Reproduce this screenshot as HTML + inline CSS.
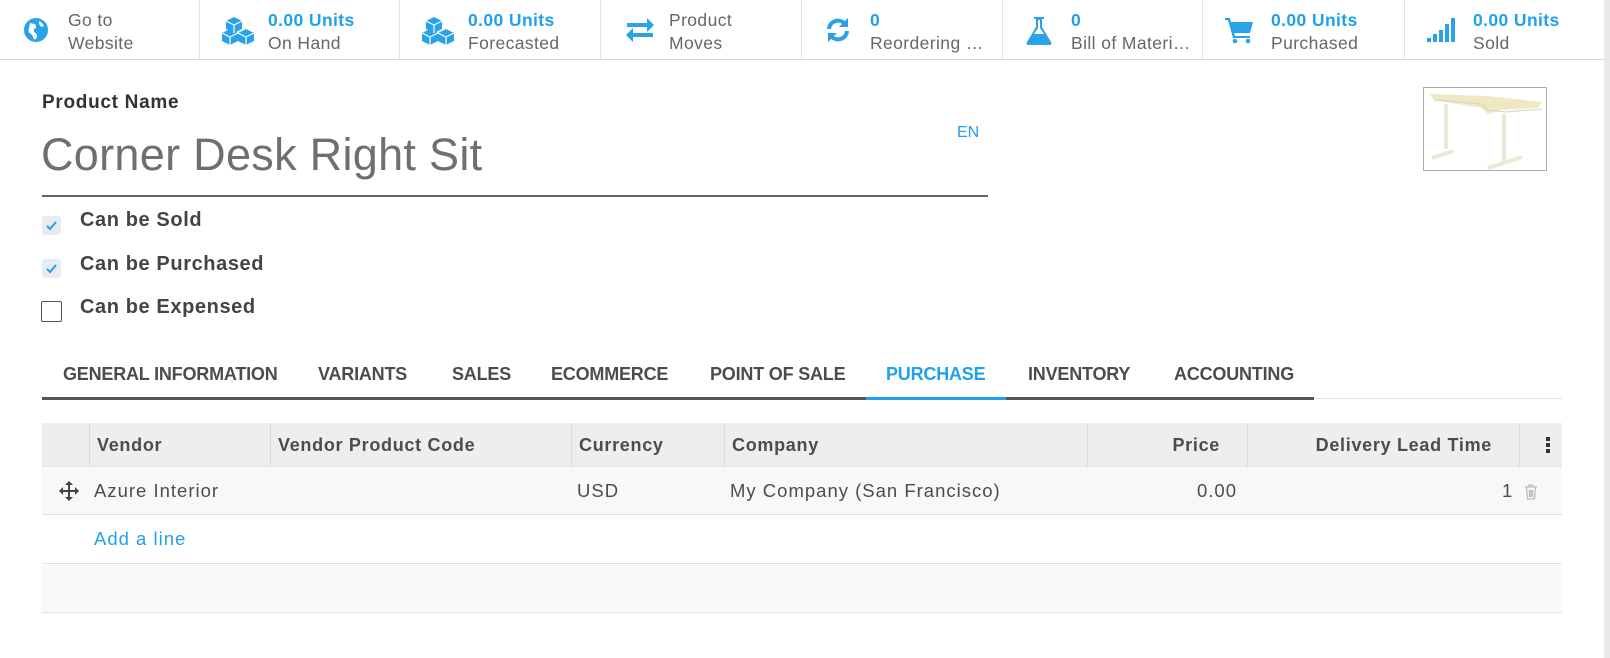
<!DOCTYPE html>
<html><head><meta charset="utf-8"><style>
*{box-sizing:border-box;margin:0;padding:0}
body{width:1610px;height:658px;background:#fff;font-family:"Liberation Sans",sans-serif;color:#4c4c4c;position:relative;overflow:hidden}
.a{position:absolute;white-space:nowrap}
.top{position:absolute;left:0;top:0;width:1605px;height:60px;border-bottom:1px solid #d8d8d8;background:#fff}
.btn{position:absolute;top:0;height:60px;border-right:1px solid #e2e2e2}
.btn svg{position:absolute;left:22px;top:16px}
.btn .t{position:absolute;left:68px;top:9px;font-size:17.5px;line-height:23px;color:#666;letter-spacing:0.4px}
.btn .b{color:#1fa1ec;font-weight:bold}
.sb{position:absolute;left:1604px;top:0;width:6px;height:658px;background:#e9e9e9}
.tab{position:absolute;top:364px;font-size:18px;font-weight:bold;color:#4c4c4c;letter-spacing:-0.2px}
.cb{position:absolute;left:42px;width:19px;height:19px;border-radius:3px;background:#e8ecf0}
.cb svg{position:absolute;left:4px;top:5px}
.lbl{position:absolute;left:80px;font-size:20px;font-weight:bold;color:#444;letter-spacing:0.6px;white-space:nowrap}
.row{position:absolute;left:42px;width:1520px}
.hd{position:absolute;top:0;height:44px;line-height:44px;font-weight:bold;font-size:18px;letter-spacing:0.7px;color:#4c4c4c;border-left:1px solid #dcdcdc;padding:0 7px;white-space:nowrap}
.hd.r{text-align:right;padding-right:27px}
.rt{font-size:18.5px;letter-spacing:1px}
</style></head><body>
<div class="top">
 <div class="btn" style="left:0;width:200px"><svg width="28" height="28" viewBox="0 0 28 28"><circle cx="14" cy="14" r="12" fill="#2aa2e8"/><path d="M8 7c3 1 5 0 6 3s-3 2-2 5 3 2 3 5-2 4-3 3-1-4-3-5-3-3-2-6z M17 5c2 1 4 3 5 5l-3 1-2-3z" fill="#fff"/></svg><div class="t">Go to<br>Website</div></div>
 <div class="btn" style="left:200px;width:200px"><svg width="38" height="30" viewBox="0 0 38 30"><g fill="#2aa2e8"><path d="M12 1l8 4v8l-8 4-8-4V5z"/><path d="M8 13l8 4v8l-8 4-8-4v-8z"/><path d="M24 13l8 4v8l-8 4-8-4v-8z"/></g><g stroke="#fff" stroke-width="1.2" fill="none"><path d="M4 5l8 4 8-4M12 9v8M0 17l8 4 8-4M8 21v8M16 17l8 4 8-4M24 21v8"/></g></svg><div class="t"><span class="b">0.00 Units</span><br>On Hand</div></div>
 <div class="btn" style="left:400px;width:201px"><svg width="38" height="30" viewBox="0 0 38 30"><g fill="#2aa2e8"><path d="M12 1l8 4v8l-8 4-8-4V5z"/><path d="M8 13l8 4v8l-8 4-8-4v-8z"/><path d="M24 13l8 4v8l-8 4-8-4v-8z"/></g><g stroke="#fff" stroke-width="1.2" fill="none"><path d="M4 5l8 4 8-4M12 9v8M0 17l8 4 8-4M8 21v8M16 17l8 4 8-4M24 21v8"/></g></svg><div class="t"><span class="b">0.00 Units</span><br>Forecasted</div></div>
 <div class="btn" style="left:601px;width:201px"><svg width="34" height="28" viewBox="0 0 34 28"><g fill="#2aa2e8"><path d="M4 7h20V2l7 7-7 7v-5H4z"/><path d="M30 17H10v-5l-7 7 7 7v-5h20z"/></g></svg><div class="t">Product<br>Moves</div></div>
 <div class="btn" style="left:802px;width:201px"><svg width="28" height="28" viewBox="0 0 28 28"><g fill="none" stroke="#2aa2e8" stroke-width="4"><path d="M5 13a9 9 0 0 1 16-5"/><path d="M23 15a9 9 0 0 1-16 5"/></g><path d="M24 2v9h-9z M4 26v-9h9z" fill="#2aa2e8"/></svg><div class="t"><span class="b">0</span><br>Reordering …</div></div>
 <div class="btn" style="left:1003px;width:200px"><svg width="28" height="30" viewBox="0 0 28 30"><path d="M9 1h10v2h-2v8l9 15c1 2 0 3-2 3H4c-2 0-3-1-2-3l9-15V3H9z" fill="#2aa2e8"/><path d="M13 4v8L9 18h10l-4-6V4z" fill="#fff"/></svg><div class="t"><span class="b">0</span><br>Bill of Materi…</div></div>
 <div class="btn" style="left:1203px;width:202px"><svg width="30" height="28" viewBox="0 0 30 28"><path d="M0 2h5l1 4h22l-3 11H9l1 3h15v2H8L3 4H0z" fill="#2aa2e8"/><circle cx="10" cy="25" r="2.3" fill="#2aa2e8"/><circle cx="23" cy="25" r="2.3" fill="#2aa2e8"/></svg><div class="t"><span class="b">0.00 Units</span><br>Purchased</div></div>
 <div class="btn" style="left:1405px;width:200px;border-right:none"><svg width="30" height="28" viewBox="0 0 30 28"><g fill="#2aa2e8"><rect x="0" y="22" width="4" height="4"/><rect x="6" y="18" width="4" height="8"/><rect x="12" y="14" width="4" height="12"/><rect x="18" y="8" width="4" height="18"/><rect x="24" y="2" width="4" height="24"/></g></svg><div class="t"><span class="b">0.00 Units</span><br>Sold</div></div>
</div>
<div class="sb"></div>

<div class="a" style="left:42px;top:92px;font-size:19px;font-weight:bold;color:#333;letter-spacing:0.7px">Product Name</div>
<div class="a" style="left:41px;top:129px;font-size:45px;color:#6f6f6f;letter-spacing:0.3px">Corner Desk Right Sit</div>
<div class="a" style="left:42px;top:195px;width:946px;height:2px;background:#666"></div>
<div class="a" style="left:957px;top:124px;font-size:16px;color:#1fa1ec">EN</div>
<div class="a" style="left:1423px;top:87px;width:124px;height:84px;border:1px solid #aaa;background:#fff">
<svg width="122" height="82" viewBox="0 0 122 82"><path d="M6 6l56 2 56 6-4 6-36 2-14 4-6-6L10 12z" fill="#efe8c3"/><path d="M10 12l48 4 6 6 18 2 36-3" stroke="#d8d4c0" fill="none"/><g stroke="#ebe8d6" stroke-width="4" fill="none"><path d="M22 16v45M8 70l22-7M80 26v48M64 80l34-11"/></g></svg></div>

<div class="cb" style="top:216px"><svg width="11" height="9" viewBox="0 0 11 9"><path d="M1 5l3 3 6-7" stroke="#1fa1ec" stroke-width="2" fill="none"/></svg></div>
<div class="lbl" style="top:209px">Can be Sold</div>
<div class="cb" style="top:259px"><svg width="11" height="9" viewBox="0 0 11 9"><path d="M1 5l3 3 6-7" stroke="#1fa1ec" stroke-width="2" fill="none"/></svg></div>
<div class="lbl" style="top:253px">Can be Purchased</div>
<div class="a" style="left:41px;top:301px;width:21px;height:21px;border:1px solid #555;border-radius:2px;background:#fff"></div>
<div class="lbl" style="top:296px">Can be Expensed</div>

<div class="tab" style="left:63px">GENERAL INFORMATION</div>
<div class="tab" style="left:318px">VARIANTS</div>
<div class="tab" style="left:452px">SALES</div>
<div class="tab" style="left:551px">ECOMMERCE</div>
<div class="tab" style="left:710px">POINT OF SALE</div>
<div class="tab" style="left:886px;color:#1fa1ec">PURCHASE</div>
<div class="tab" style="left:1028px">INVENTORY</div>
<div class="tab" style="left:1174px">ACCOUNTING</div>
<div class="a" style="left:42px;top:398px;width:1520px;height:1px;background:#dde3ea"></div>
<div class="a" style="left:42px;top:397px;width:1272px;height:3px;background:#555"></div>
<div class="a" style="left:866px;top:397px;width:140px;height:3px;background:#1fa1ec"></div>

<div class="row" style="top:423px;height:44px;background:#eeeeee;border-bottom:1px solid #dde1e8">
 <div class="hd" style="left:47px;width:181px">Vendor</div>
 <div class="hd" style="left:228px;width:301px">Vendor Product Code</div>
 <div class="hd" style="left:529px;width:153px">Currency</div>
 <div class="hd" style="left:682px;width:363px">Company</div>
 <div class="hd r" style="left:1045px;width:160px">Price</div>
 <div class="hd r" style="left:1205px;width:272px">Delivery Lead Time</div>
 <div class="hd" style="left:1477px;width:43px"><svg width="6" height="18" viewBox="0 0 6 18" style="position:absolute;left:25px;top:13px"><g fill="#333"><rect x="1" y="1" width="4" height="4"/><rect x="1" y="7" width="4" height="4"/><rect x="1" y="13" width="4" height="4"/></g></svg></div>
</div>
<div class="row rt" style="top:468px;height:47px;background:#f8f8f8;border-bottom:1px solid #dde1e8;line-height:46px">
 <svg width="20" height="20" viewBox="0 0 20 20" style="position:absolute;left:17px;top:13px"><g fill="#444"><path d="M10 0l4 4h-3v5h5V6l4 4-4 4v-3h-5v5h3l-4 4-4-4h3v-5H4v3l-4-4 4-4v3h5V4H6z"/></g></svg>
 <span class="a" style="left:52px">Azure Interior</span>
 <span class="a" style="left:535px">USD</span>
 <span class="a" style="left:688px">My Company (San Francisco)</span>
 <span class="a" style="left:1155px">0.00</span>
 <span class="a" style="left:1460px">1</span>
 <svg width="14" height="16" viewBox="0 0 14 16" style="position:absolute;left:1482px;top:16px"><g fill="none" stroke="#b8bcc4" stroke-width="1.3"><path d="M1 3h12M5 3V1h4v2M2.5 3l1 12h7l1-12M5.5 6v7M7 6v7M8.5 6v7"/></g></svg>
</div>
<div class="row" style="top:516px;height:48px;border-bottom:1px solid #dde1e8">
 <span class="a rt" style="left:52px;top:12px;color:#1fa1ec">Add a line</span>
</div>
<div class="row" style="top:565px;height:48px;background:#f8f8f8;border-bottom:1px solid #dde1e8"></div>
</body></html>
